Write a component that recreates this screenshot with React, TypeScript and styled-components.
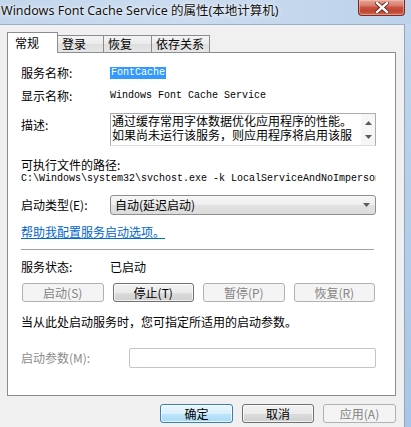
import React from 'react';
import styled, { createGlobalStyle } from 'styled-components';

const cjk = `"Noto Sans CJK SC", "Noto Sans", sans-serif`;
const mono = `"Liberation Mono", "DejaVu Sans Mono", monospace`;

const GlobalStyle = createGlobalStyle`
  html, body { margin: 0; padding: 0; }
  body {
    width: 411px;
    height: 427px;
    overflow: hidden;
    font-family: ${cjk};
    font-size: 12px;
    color: #000;
  }
  * { box-sizing: border-box; }
`;

const Window = styled.div`
  width: 411px;
  height: 427px;
  display: flex;
  flex-direction: column;
  background: linear-gradient(to bottom, #c4d8ee 0%, #b7cfea 40%, #a9c6e6 100%);
`;

const TitleBar = styled.div`
  height: 24px;
  flex: none;
  display: flex;
  justify-content: space-between;
  align-items: flex-start;
  background: linear-gradient(to right, #c2d6ec 0%, #cbdcf0 45%, #bcd2ea 100%);
`;

const Title = styled.div`
  padding: 3px 0 0 1px;
  font-family: "Noto Sans", ${cjk};
  font-size: 12.5px;
  line-height: 16px;
  color: #111;
  text-shadow: 0 0 6px rgba(255, 255, 255, 0.95), 0 0 2px rgba(255, 255, 255, 0.9);
  white-space: nowrap;
`;

const CloseButton = styled.div`
  width: 47px;
  height: 16px;
  margin-right: 6px;
  border: 1px solid #7a2a22;
  border-top: none;
  border-radius: 0 0 4px 4px;
  background: linear-gradient(to bottom, #e4a395 0%, #d98272 35%, #c9513d 50%, #bd4632 75%, #d06a52 100%);
  display: flex;
  align-items: center;
  justify-content: center;
  box-shadow: inset 0 0 0 1px rgba(255, 200, 190, 0.5);
`;

const Body = styled.div`
  flex: 1;
  margin-right: 6px;
  background: #f0f0f0;
  border-top: 1px solid #9db3cd;
  border-right: 1px solid #8fa6c2;
  display: flex;
  flex-direction: column;
`;

const TabRow = styled.div`
  height: 21px;
  margin-top: 7px;
  margin-bottom: -1px;
  padding-left: 7px;
  display: flex;
  align-items: flex-end;
`;

const Tab = styled.div<{ $active?: boolean; $w: number }>`
  width: ${(p) => p.$w}px;
  height: ${(p) => (p.$active ? 21 : 18)}px;
  padding-left: ${(p) => (p.$active ? 7 : 4)}px;
  padding-top: ${(p) => (p.$active ? 3 : 1)}px;
  border: 1px solid #898c95;
  border-bottom: ${(p) => (p.$active ? 'none' : '1px solid #898c95')};
  margin-left: -1px;
  background: ${(p) =>
    p.$active ? '#ffffff' : 'linear-gradient(to bottom, #f3f3f3 0%, #ebebeb 50%, #dedede 51%, #e6e6e6 100%)'};
  position: relative;
  z-index: ${(p) => (p.$active ? 1 : 0)};
  font-size: 12px;
  line-height: 14px;
  white-space: nowrap;
  &:first-child { margin-left: 0; }
`;

const Panel = styled.div`
  height: 344px;
  margin: 0 8px 0 7px;
  background: #ffffff;
  border: 1px solid #898c95;
  padding: 13px 19px 0 13px;
  display: flex;
  flex-direction: column;
`;

const Row = styled.div<{ $mt: number; $h: number; $top?: boolean }>`
  margin-top: ${(p) => p.$mt}px;
  height: ${(p) => p.$h}px;
  display: flex;
  align-items: ${(p) => (p.$top ? 'flex-start' : 'center')};
  flex: none;
`;

const Label = styled.div<{ $w?: number; $mt?: number; $disabled?: boolean }>`
  width: ${(p) => p.$w ?? 89}px;
  flex: none;
  margin-top: ${(p) => p.$mt ?? 0}px;
  line-height: 14px;
  white-space: nowrap;
  color: ${(p) => (p.$disabled ? '#8c8c8c' : '#000')};
`;

const MonoText = styled.span`
  font-family: ${mono};
  font-size: 10px;
  line-height: 12px;
  white-space: nowrap;
`;

const Selected = styled.span`
  font-family: ${mono};
  font-size: 10px;
  line-height: 12px;
  padding: 0 1px;
  background: #3399ff;
  color: #fff;
`;

const PlainText = styled.div`
  line-height: 14px;
  white-space: nowrap;
`;

const PathText = styled.div`
  width: 357px;
  overflow: hidden;
  font-family: ${mono};
  font-size: 10px;
  line-height: 12px;
  white-space: nowrap;
`;

const DescBox = styled.div`
  width: 267px;
  height: 33px;
  border: 1px solid #abadb3;
  border-bottom-color: #dadde3;
  background: #fff;
  display: flex;
  overflow: hidden;
`;

const DescText = styled.div`
  flex: 1;
  padding-left: 1px;
  font-size: 12px;
  line-height: 14px;
  white-space: nowrap;
  overflow: hidden;
`;

const ScrollTrack = styled.div`
  width: 14px;
  flex: none;
  background: #f6f6f6;
  display: flex;
  flex-direction: column;
  justify-content: space-between;
  align-items: center;
  padding: 7px 0 6px;
`;

const Combo = styled.div`
  width: 267px;
  height: 20px;
  border: 1px solid #8e8f8f;
  border-radius: 3px;
  background: linear-gradient(to bottom, #f6f6f6 0%, #eeeeee 50%, #e2e2e2 51%, #dcdcdc 100%);
  display: flex;
  align-items: center;
  justify-content: space-between;
  padding: 0 5px 0 4px;
  line-height: 14px;
`;

const Link = styled.a`
  color: #0066cc;
  text-decoration: underline;
  line-height: 14px;
  white-space: nowrap;
`;

const Separator = styled.div`
  margin-top: 10px;
  height: 1px;
  margin-right: 2px;
  background: #a0a0a0;
  flex: none;
`;

const ButtonGrid = styled.div`
  margin-top: 9px;
  height: 19px;
  margin-left: 1px;
  margin-right: 1px;
  display: grid;
  grid-template-columns: repeat(4, 1fr);
  column-gap: 9px;
  flex: none;
`;

const Button = styled.div<{ $disabled?: boolean; $default?: boolean; $w?: number }>`
  ${(p) => (p.$w ? `width: ${p.$w}px;` : '')}
  height: 19px;
  border-radius: 3px;
  border: 1px solid ${(p) => (p.$disabled ? '#adb2b5' : p.$default ? '#3c7fb1' : '#707070')};
  background: ${(p) =>
    p.$disabled
      ? '#f4f4f4'
      : p.$default
      ? 'linear-gradient(to bottom, #eaf6fd 0%, #d9f0fc 50%, #bee6fd 51%, #a7d9f5 100%)'
      : 'linear-gradient(to bottom, #f2f2f2 0%, #ebebeb 50%, #dddddd 51%, #cfcfcf 100%)'};
  box-shadow: ${(p) => (p.$disabled ? 'none' : 'inset 0 0 0 1px rgba(255,255,255,0.7)')};
  color: ${(p) => (p.$disabled ? '#838383' : '#000')};
  display: flex;
  align-items: center;
  justify-content: center;
  font-size: 12px;
  line-height: 14px;
  white-space: nowrap;
`;

const ParamInput = styled.div`
  width: 248px;
  height: 20px;
  border: 1px solid #c3c5c9;
  border-radius: 2px;
  background: #fff;
`;

const Footer = styled.div`
  margin-top: 8px;
  padding-right: 8px;
  display: flex;
  justify-content: flex-end;
  gap: 9px;
`;

const Arrow = ({ up }: { up?: boolean }) => (
  <svg width="7" height="4" viewBox="0 0 7 4">
    <path d={up ? 'M0 4 L3.5 0 L7 4 Z' : 'M0 0 L3.5 4 L7 0 Z'} fill="#5a5a5a" />
  </svg>
);

const CloseX = () => (
  <svg width="14" height="11" viewBox="0 0 14 11">
    <path d="M2 1 L12 10 M12 1 L2 10" stroke="#5b1a12" strokeWidth="4" strokeLinecap="square" />
    <path d="M2 1 L12 10 M12 1 L2 10" stroke="#ffffff" strokeWidth="2.4" strokeLinecap="square" />
  </svg>
);

export default function App() {
  return (
    <>
      <GlobalStyle />
      <Window>
        <TitleBar>
          <Title>Windows Font Cache Service 的属性(本地计算机)</Title>
          <CloseButton>
            <CloseX />
          </CloseButton>
        </TitleBar>
        <Body>
          <TabRow>
            <Tab $active $w={51}>常规</Tab>
            <Tab $w={47}>登录</Tab>
            <Tab $w={49}>恢复</Tab>
            <Tab $w={59}>依存关系</Tab>
          </TabRow>
          <Panel>
            <Row $mt={0} $h={14}>
              <Label>服务名称:</Label>
              <Selected>FontCache</Selected>
            </Row>
            <Row $mt={9} $h={14}>
              <Label>显示名称:</Label>
              <MonoText>Windows Font Cache Service</MonoText>
            </Row>
            <Row $mt={10} $h={33} $top>
              <Label $mt={5}>描述:</Label>
              <DescBox>
                <DescText>
                  通过缓存常用字体数据优化应用程序的性能。
                  <br />
                  如果尚未运行该服务，则应用程序将启用该服
                </DescText>
                <ScrollTrack>
                  <Arrow up />
                  <Arrow />
                </ScrollTrack>
              </DescBox>
            </Row>
            <Row $mt={12} $h={14}>
              <PlainText>可执行文件的路径:</PlainText>
            </Row>
            <Row $mt={1} $h={12}>
              <PathText>C:\Windows\system32\svchost.exe -k LocalServiceAndNoImpersonation</PathText>
            </Row>
            <Row $mt={10} $h={20}>
              <Label>启动类型(E):</Label>
              <Combo>
                <span>自动(延迟启动)</span>
                <Arrow />
              </Combo>
            </Row>
            <Row $mt={10} $h={14}>
              <Link>帮助我配置服务启动选项。</Link>
            </Row>
            <Separator />
            <Row $mt={10} $h={14}>
              <Label>服务状态:</Label>
              <PlainText>已启动</PlainText>
            </Row>
            <ButtonGrid>
              <Button $disabled>启动(S)</Button>
              <Button>停止(T)</Button>
              <Button $disabled>暂停(P)</Button>
              <Button $disabled>恢复(R)</Button>
            </ButtonGrid>
            <Row $mt={13} $h={14}>
              <PlainText>当从此处启动服务时，您可指定所适用的启动参数。</PlainText>
            </Row>
            <Row $mt={19} $h={20}>
              <Label $w={108} $disabled>启动参数(M):</Label>
              <ParamInput />
            </Row>
          </Panel>
          <Footer>
            <Button $default $w={73}>确定</Button>
            <Button $w={72}>取消</Button>
            <Button $disabled $w={73}>应用(A)</Button>
          </Footer>
        </Body>
      </Window>
    </>
  );
}
